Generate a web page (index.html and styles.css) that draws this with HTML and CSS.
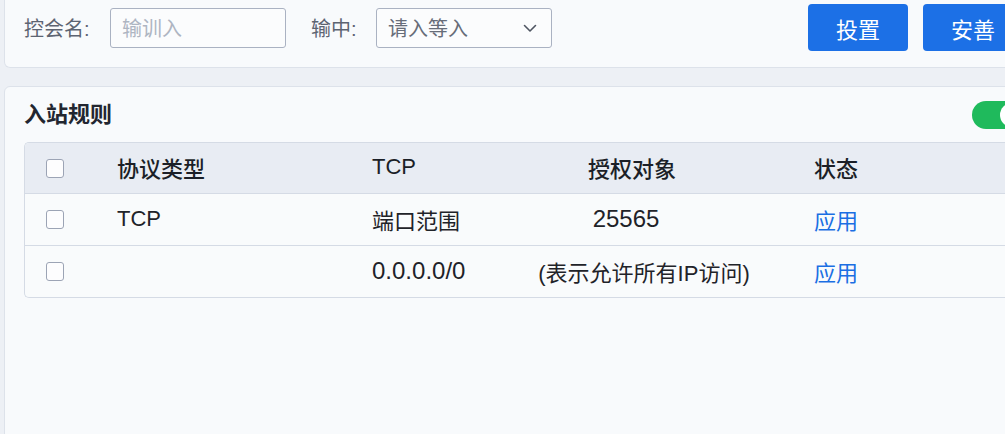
FILE: index.html
```html
<!DOCTYPE html>
<html lang="zh-CN">
<head>
<meta charset="utf-8">
<link rel="stylesheet" href="styles.css">
</head>
<body>
<div class="page">
  <div class="card filter-bar">
    <label class="f-label">控会名:</label>
    <div class="input"><span class="placeholder">输训入</span></div>
    <label class="f-label second">输中:</label>
    <div class="select">
      <span class="sel-text">请入等入</span>
      <svg class="chev" width="14" height="9" viewBox="0 0 14 9"><path d="M1.5 1.5 L7 7 L12.5 1.5" fill="none" stroke="#4f5562" stroke-width="1.6" stroke-linecap="round" stroke-linejoin="round"/></svg>
    </div>
    <div class="spacer"></div>
    <button class="btn">投置</button>
    <button class="btn">安善</button>
  </div>

  <div class="card rules">
    <div class="rules-head">
      <h2 class="title">入站规则</h2>
      <div class="toggle"><span class="knob"></span></div>
    </div>
    <div class="table">
      <div class="tr th">
        <div class="cell chk"><span class="box"></span></div>
        <div class="cell">协议类型</div>
        <div class="cell">TCP</div>
        <div class="cell center shift-h">授权对象</div>
        <div class="cell st">状态</div>
        <div class="cell"></div>
      </div>
      <div class="tr">
        <div class="cell chk"><span class="box"></span></div>
        <div class="cell">TCP</div>
        <div class="cell">端口范围</div>
        <div class="cell center shift-l"><span class="num">25565</span></div>
        <div class="cell st link">应用</div>
        <div class="cell"></div>
      </div>
      <div class="tr last">
        <div class="cell chk"><span class="box"></span></div>
        <div class="cell"></div>
        <div class="cell"><span class="num">0.0.0.0/0</span></div>
        <div class="cell center shift-r">(表示允许所有IP访问)</div>
        <div class="cell st link">应用</div>
        <div class="cell"></div>
      </div>
    </div>
  </div>
</div>
</body>
</html>
```

FILE: styles.css
```css
* { box-sizing: border-box; }
html, body {
  margin: 0;
  padding: 0;
  background: #edf0f5;
  overflow: hidden;
  height: 434px;
}
body {
  font-family: "Liberation Sans", "Noto Sans CJK SC", sans-serif;
  color: #1f2329;
}
.page {
  width: 1060px;
  padding-left: 4px;
}
.card {
  background: #f8fafc;
  border: 1px solid #dde2ea;
}
.filter-bar {
  display: flex;
  align-items: center;
  height: 68px;
  padding: 4px 0 16px 19px;
  border-top: none;
  border-radius: 0 0 6px 6px;
}
.f-label {
  font-size: 20px;
  color: #5d6472;
  width: 86px;
  white-space: nowrap;
}
.f-label.second { width: 65px; margin-left: 25px; }
.input, .select {
  height: 40px;
  width: 177px;
  background: #fbfcfd;
  border: 1px solid #aab2c2;
  border-radius: 3px;
  display: flex;
  align-items: center;
  padding-left: 11px;
  font-size: 20px;
}
.input { width: 176px; }
.placeholder { color: #aeb5c2; }
.select { width: 176px; padding-right: 14px; justify-content: space-between; }
.sel-text { color: #676d79; }
.chev { margin-top: 1px; }
.spacer { width: 256px; flex: none; }
.btn {
  flex: none;
  width: 100px;
  height: 47px;
  border: none;
  border-radius: 4px;
  background: #1c70e6;
  color: #fff;
  font-family: "Liberation Sans", "Noto Sans CJK SC", sans-serif;
  font-size: 22px;
  margin-right: 15px;
  padding: 0;
}
.rules {
  margin-top: 18px;
  border-radius: 6px 0 0 0;
  height: 400px;
  padding: 0 0 0 19px;
}
.rules-head {
  height: 55px;
  display: flex;
  align-items: center;
  justify-content: space-between;
  padding-right: 33px;
}
.title {
  margin: 0;
  padding-bottom: 5px;
  font-size: 22px;
  font-weight: 700;
  color: #222630;
}
.toggle {
  width: 54px;
  height: 28px;
  border-radius: 14px;
  background: #1fba5c;
  position: relative;
}
.knob {
  position: absolute;
  right: 2px;
  top: 2px;
  width: 24px;
  height: 24px;
  border-radius: 50%;
  background: #fff;
}
.table {
  border: 1px solid #d5dbe5;
  border-right: none;
  border-radius: 5px 0 0 5px;
  overflow: hidden;
  background: #f9fbfc;
}
.tr {
  display: grid;
  grid-template-columns: 92px 255px 143px 240px 200px 1fr;
  height: 52px;
  border-bottom: 1px solid #d5dbe5;
  align-items: center;
  font-size: 22px;
  color: #1f2329;
}
.tr .cell { padding-bottom: 2px; }
.tr .cell.chk { padding-bottom: 0; }
.tr.last { border-bottom: none; height: 51px; }
.th {
  height: 51px;
  background: #e8ecf3;
  font-weight: 500;
  color: #1b1f27;
}
.cell { white-space: nowrap; }
.num { font-size: 24px; }
.center { text-align: center; }
.shift-h { padding-right: 6px; }
.shift-l { padding-right: 18px; }
.shift-r { padding-left: 18px; }
.st { padding-left: 59px; }
.link { color: #1b6fe3; }
.chk { padding-left: 21px; display: flex; align-items: center; }
.box {
  width: 18px;
  height: 19px;
  border: 1.5px solid #9ca4b5;
  border-radius: 3px;
  background: #fdfdfe;
}
```
